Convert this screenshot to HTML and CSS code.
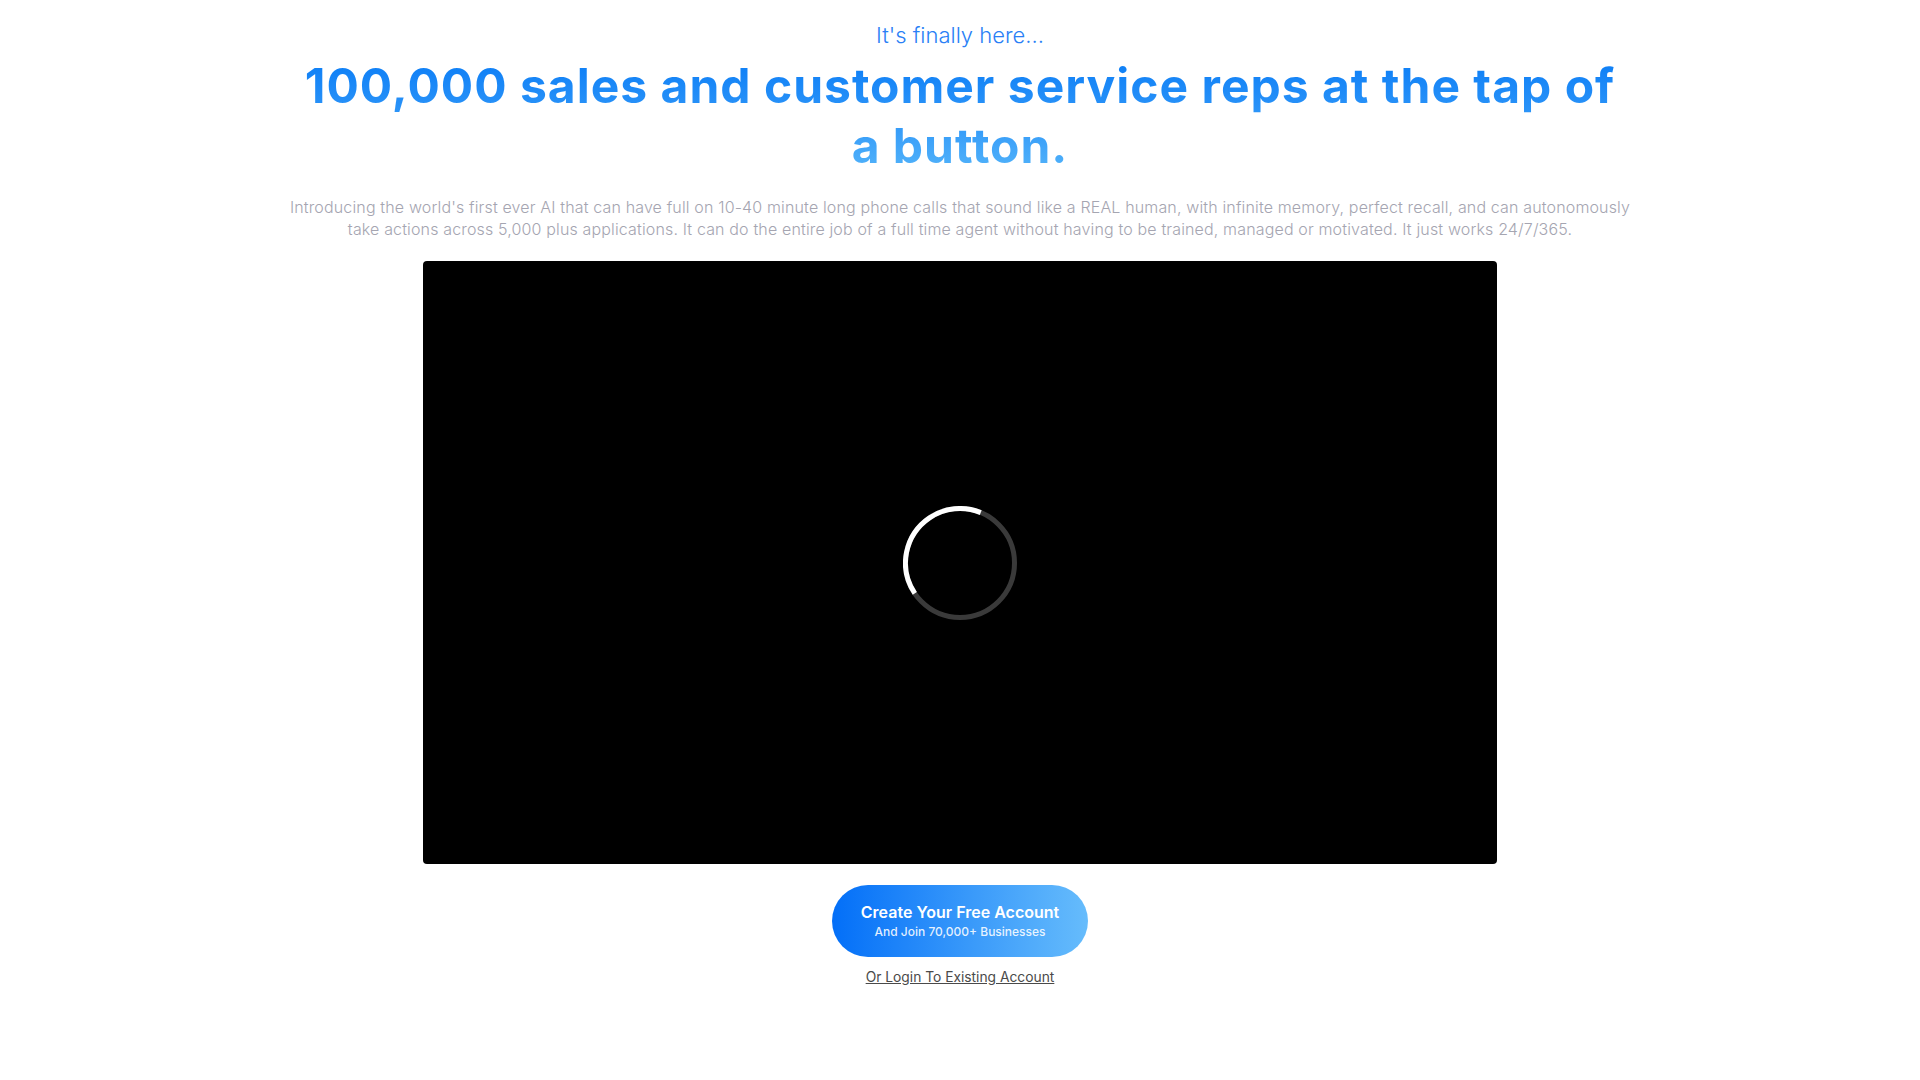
FILE: index.html
```html
<!DOCTYPE html>
<html lang="en">
<head>
<meta charset="utf-8">
<title>100,000 sales and customer service reps</title>
<link rel="stylesheet" href="styles.css">
</head>
<body>
<main class="hero">
  <p class="eyebrow">It's finally here...</p>
  <h1 class="headline">100,000 sales and customer service reps at the tap of a button.</h1>
  <p class="lead">Introducing the world's first ever AI that can have full on 10-40 minute long phone calls that sound like a REAL human, with infinite memory, perfect recall, and can autonomously take actions across 5,000 plus applications. It can do the entire job of a full time agent without having to be trained, managed or motivated. It just works 24/7/365.</p>
  <div class="video">
    <svg class="spinner" width="114" height="114" viewBox="0 0 114 114">
      <circle cx="57" cy="57" r="54.5" fill="none" stroke="#3a3a3a" stroke-width="5"/>
      <circle cx="57" cy="57" r="54.5" fill="none" stroke="#ffffff" stroke-width="5" stroke-dasharray="139 400" transform="rotate(146 57 57)"/>
    </svg>
  </div>
  <a class="cta" href="#">
    <span class="cta-title">Create Your Free Account</span>
    <span class="cta-sub">And Join 70,000+ Businesses</span>
  </a>
  <a class="login" href="#">Or Login To Existing Account</a>
</main>
</body>
</html>
```
FILE: styles.css
```css
html, body {
  margin: 0;
  padding: 0;
  background: #ffffff;
}
body {
  font-family: Inter, "Noto Sans", "Liberation Sans", sans-serif;
}
.hero {
  display: flex;
  flex-direction: column;
  align-items: center;
  padding-top: 19px;
}
.eyebrow {
  margin: 0;
  font-size: 22px;
  line-height: 32px;
  font-weight: 300;
  color: #2a7ff6;
}
.headline {
  margin: 5px 0 0;
  width: 1340px;
  text-align: center;
  font-size: 48px;
  line-height: 60px;
  font-weight: 700;
  letter-spacing: 1px;
  background: linear-gradient(180deg, #0a7cf6 0%, #2a93f8 45%, #55b5fa 100%);
  -webkit-background-clip: text;
  background-clip: text;
  color: transparent;
}
.lead {
  margin: 20px 0 0;
  width: 1350px;
  text-align: center;
  font-size: 16px;
  line-height: 22px;
  font-weight: 300;
  letter-spacing: 0.15px;
  color: #a5a5b1;
}
.video {
  margin-top: 21px;
  width: 1074px;
  height: 603px;
  background: #000000;
  border-radius: 4px;
  display: flex;
  align-items: center;
  justify-content: center;
}
.spinner {
  display: block;
}
.cta {
  margin-top: 21px;
  width: 256px;
  height: 72px;
  border-radius: 36px;
  background: linear-gradient(90deg, #036ff8 0%, #3a9afa 55%, #66bcfc 100%);
  display: flex;
  flex-direction: column;
  align-items: center;
  justify-content: center;
  text-decoration: none;
  color: #ffffff;
}
.cta-title {
  font-size: 16px;
  line-height: 20px;
  font-weight: 600;
}
.cta-sub {
  margin-top: 2px;
  font-size: 12px;
  line-height: 16px;
  font-weight: 500;
  color: rgba(255, 255, 255, 0.88);
}
.login {
  margin-top: 11px;
  font-size: 13.8px;
  line-height: 18px;
  color: #4a4a4a;
  text-decoration: underline;
}
```
